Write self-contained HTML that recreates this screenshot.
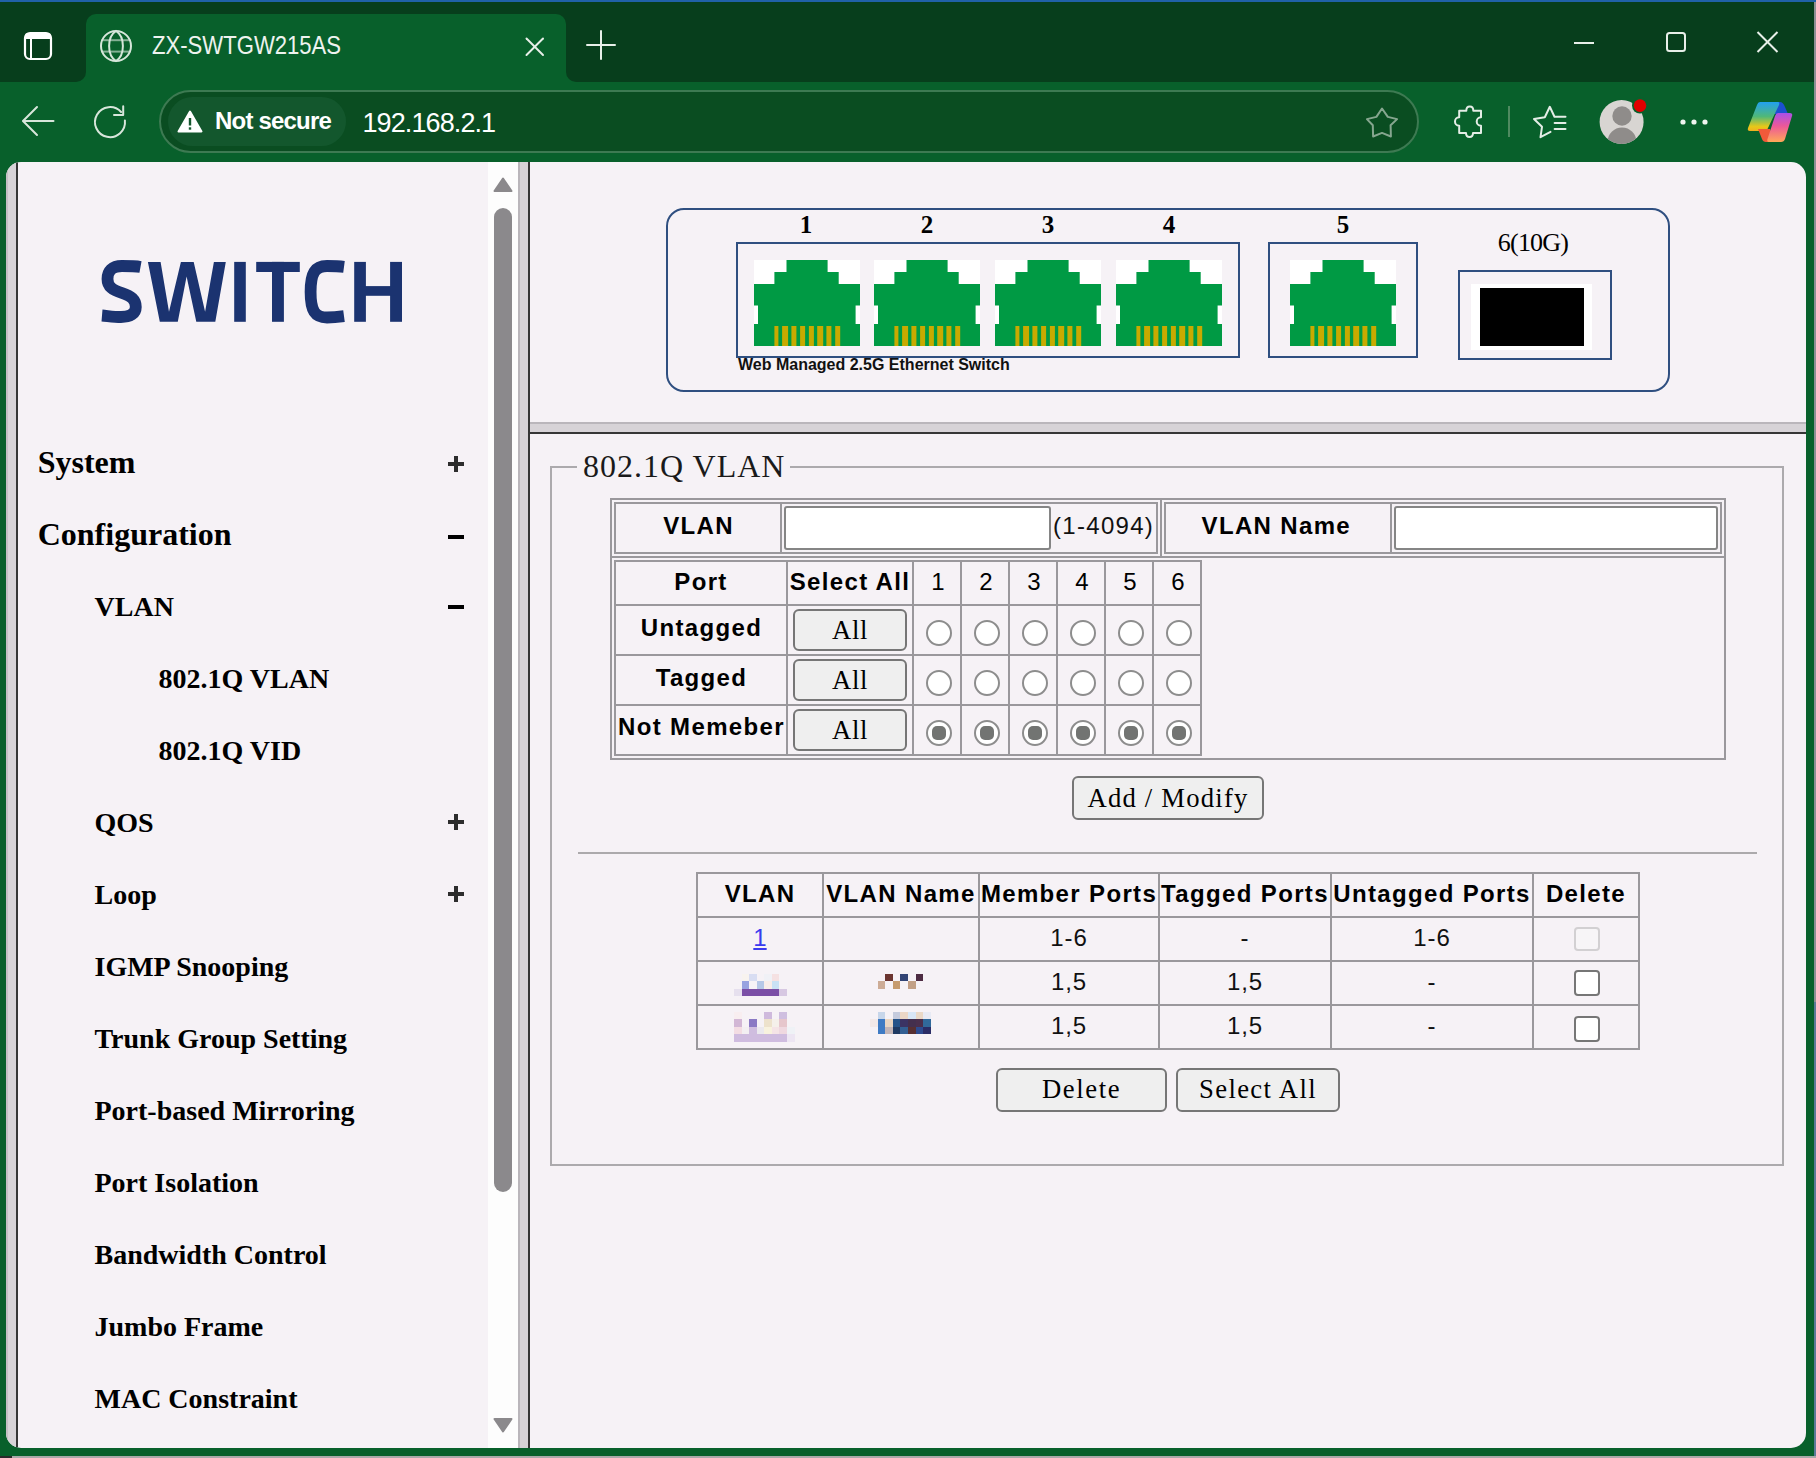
<!DOCTYPE html><html><head><meta charset="utf-8"><title>ZX-SWTGW215AS</title><style>html,body{margin:0;padding:0}body{width:1816px;height:1458px;overflow:hidden;position:relative}*{box-sizing:border-box}</style></head><body><div style="position:absolute;left:0px;top:0px;width:1816px;height:1458px;background:#5b7a98"></div><div style="position:absolute;left:0px;top:0px;width:1816px;height:2px;background:#2062a8"></div><div style="position:absolute;left:0px;top:2px;width:1814px;height:1454px;background:#08602b"></div><div style="position:absolute;left:0px;top:1456px;width:12px;height:2px;background:#2a2a2a"></div><div style="position:absolute;left:12px;top:1456px;width:1804px;height:2px;background:#a9a9a9"></div><div style="position:absolute;left:1814px;top:2px;width:2px;height:1000px;background:#8d8f94"></div><div style="position:absolute;left:0px;top:2px;width:86px;height:80px;background:#073e1c;border-bottom-right-radius:10px"></div><div style="position:absolute;left:566px;top:2px;width:1248px;height:80px;background:#073e1c;border-bottom-left-radius:10px"></div><div style="position:absolute;left:86px;top:2px;width:480px;height:30px;background:#073e1c"></div><div style="position:absolute;left:86px;top:14px;width:480px;height:68px;background:#08602b;border-top-left-radius:10px;border-top-right-radius:10px"></div><svg style="position:absolute;left:22px;top:30px;" width="32" height="32" viewBox="0 0 32 32"><rect x="3" y="3" width="26" height="26" rx="5" fill="none" stroke="#fff" stroke-width="2.2"/><rect x="3" y="3" width="26" height="6" rx="3" fill="#fff"/><rect x="3" y="6" width="26" height="3" fill="#fff"/><line x1="9" y1="8" x2="9" y2="28" stroke="#fff" stroke-width="2"/></svg><svg style="position:absolute;left:99px;top:29px;" width="34" height="34" viewBox="0 0 34 34"><g fill="none" stroke="#d6e6da" stroke-width="2"><circle cx="17" cy="17" r="15"/><path d="M17 2 C11.5 5.5 10.1 10 10.1 17 C10.1 24 11.5 28.5 17 32 C22.5 28.5 23.9 24 23.9 17 C23.9 10 22.5 5.5 17 2 Z"/><g stroke-opacity="0.6"><line x1="2.5" y1="11.2" x2="31.5" y2="11.2"/><line x1="2.5" y1="22.6" x2="31.5" y2="22.6"/></g></g></svg><div style="position:absolute;left:152px;top:32.38px;font:normal 25px/27.925px 'Liberation Sans',sans-serif;color:#eef3ef;letter-spacing:0px;white-space:nowrap;text-align:left;transform-origin:0 0;transform:scaleX(0.884)">ZX-SWTGW215AS</div><svg style="position:absolute;left:522px;top:34px;" width="26" height="26" viewBox="0 0 26 26"><g stroke="#e8efe9" stroke-width="2" stroke-linecap="round"><line x1="4.5" y1="4.5" x2="21" y2="21"/><line x1="21" y1="4.5" x2="4.5" y2="21"/></g></svg><svg style="position:absolute;left:584px;top:28px;" width="34" height="34" viewBox="0 0 34 34"><g stroke="#e8efe9" stroke-width="2" stroke-linecap="round"><line x1="17" y1="3" x2="17" y2="31"/><line x1="3" y1="17" x2="31" y2="17"/></g></svg><svg style="position:absolute;left:1570px;top:36px;" width="28" height="14" viewBox="0 0 28 14"><line x1="4" y1="7" x2="24" y2="7" stroke="#e8efe9" stroke-width="2"/></svg><svg style="position:absolute;left:1662px;top:28px;" width="28" height="28" viewBox="0 0 28 28"><rect x="5" y="5" width="18" height="18" rx="2.5" fill="none" stroke="#e8efe9" stroke-width="2"/></svg><svg style="position:absolute;left:1753px;top:28px;" width="30" height="28" viewBox="0 0 30 28"><g stroke="#e8efe9" stroke-width="2"><line x1="4.5" y1="4" x2="24.5" y2="24"/><line x1="24.5" y1="4" x2="4.5" y2="24"/></g></svg><svg style="position:absolute;left:14px;top:98px;" width="48" height="48" viewBox="0 0 48 48"><g fill="none" stroke="#d8e6db" stroke-width="2" stroke-linecap="round" stroke-linejoin="round"><line x1="9.5" y1="23" x2="39.5" y2="23"/><polyline points="23,9 9,23 23,37"/></g></svg><svg style="position:absolute;left:86px;top:98px;" width="48" height="48" viewBox="0 0 48 48"><g fill="none" stroke="#d8e6db" stroke-width="2" stroke-linecap="round" stroke-linejoin="round"><path d="M38.9 22.4 A 15 15 0 1 1 35.1 14"/><polyline points="28,17.1 37.2,17.1 37.2,8.2"/></g></svg><div style="position:absolute;left:159px;top:90px;width:1260px;height:63px;background:#0a4d21;border:2px solid #3d7a52;border-radius:32px"></div><div style="position:absolute;left:168px;top:97px;width:178px;height:49px;background:#13572d;border-radius:25px"></div><svg style="position:absolute;left:175px;top:108px;" width="30" height="26" viewBox="0 0 30 26"><path d="M15 3.5 L26.5 23.5 L3.5 23.5 Z" fill="#fff" stroke="#fff" stroke-width="2" stroke-linejoin="round"/><rect x="13.8" y="10" width="2.4" height="7.5" fill="#13572d"/><rect x="13.8" y="19.3" width="2.4" height="2.4" fill="#13572d"/></svg><div style="position:absolute;left:215px;top:108.28px;font:bold 24px/26.808px 'Liberation Sans',sans-serif;color:#fff;letter-spacing:-0.8px;white-space:nowrap;text-align:left;">Not secure</div><div style="position:absolute;left:362.5px;top:107.87px;font:normal 27px/30.159px 'Liberation Sans',sans-serif;color:#fff;letter-spacing:-0.9px;white-space:nowrap;text-align:left;">192.168.2.1</div><svg style="position:absolute;left:1356px;top:98px;" width="52" height="48" viewBox="0 0 52 48"><polygon points="26,10.5 20.4,18.9 10.9,21.1 16.8,27.3 17.1,38.5 26,34.9 34.9,38.5 34.6,27.3 41.1,21.1 31.8,18.9" fill="none" stroke="#86a68f" stroke-width="2" stroke-linejoin="round"/></svg><svg style="position:absolute;left:1446px;top:100px;" width="44" height="44" viewBox="0 0 44 44"><path d="M13.2 10.7 H20.3 C20.3 5.2 27.3 5.2 27.3 10.7 H35 V17.2 C29.3 17.2 29.3 25.8 35 25.8 V33 H27 C27 38.3 20 38.3 20 33 H13.2 V25.8 C7.6 25.8 7.6 17.2 13.2 17.2 Z" fill="none" stroke="#e4ede6" stroke-width="2" stroke-linejoin="round"/></svg><div style="position:absolute;left:1508px;top:106px;width:2px;height:31px;background:#4f8a60"></div><svg style="position:absolute;left:1526px;top:100px;" width="48" height="44" viewBox="0 0 48 44"><g fill="none" stroke="#e4ede6" stroke-width="2" stroke-linejoin="round" stroke-linecap="round"><polyline points="24.5,31.9 14.5,37.2 16,26.8 8,19 18.8,17.2 23.8,6.8 28.5,16.8 39.5,16.8"/><line x1="28.6" y1="22.9" x2="39.5" y2="22.9"/><line x1="28.6" y1="29" x2="39.5" y2="29"/></g></svg><svg style="position:absolute;left:1596px;top:96px;" width="52" height="52" viewBox="0 0 52 52"><defs><clipPath id="pc"><circle cx="25.6" cy="26" r="22"/></clipPath></defs><circle cx="25.6" cy="26" r="22" fill="#d8d5d2"/><g clip-path="url(#pc)" fill="#8f8c8a"><circle cx="26" cy="20" r="9.7"/><ellipse cx="26" cy="46" rx="14.5" ry="14.5"/></g><circle cx="44" cy="9.6" r="8" fill="#08602b"/><circle cx="44" cy="9.6" r="6.3" fill="#e00000"/></svg><svg style="position:absolute;left:1678px;top:114px;" width="32" height="16" viewBox="0 0 32 16"><g fill="#f0f4f0"><circle cx="5" cy="8" r="2.6"/><circle cx="16" cy="8" r="2.6"/><circle cx="27" cy="8" r="2.6"/></g></svg><svg style="position:absolute;left:1740px;top:96px;" width="60" height="52" viewBox="0 0 60 52"><defs><linearGradient id="cg1" x1="0" y1="0" x2="0" y2="1"><stop offset="0" stop-color="#22a0f0"/><stop offset="0.5" stop-color="#50b878"/><stop offset="0.85" stop-color="#e8c818"/><stop offset="1" stop-color="#f0b020"/></linearGradient><linearGradient id="cg2" x1="0" y1="0" x2="0" y2="1"><stop offset="0" stop-color="#a850e8"/><stop offset="0.45" stop-color="#ec5898"/><stop offset="1" stop-color="#ffa858"/></linearGradient></defs><path d="M34 6 H40 Q43 6 45 11 L48 18 H34 Z" fill="#1c50d0"/><path d="M20 6 H38 Q40 6 39 9 L27 34 Q26 35 24 35 H10 Q7 35 8 32 L17 9 Q18 6 20 6 Z" fill="url(#cg1)"/><path d="M18 33 H30 L34 46 H26 Q23 46 22 43 Z" fill="#f05a3a"/><path d="M38 17 H50 Q53 17 52 20 L45 43 Q44 46 41 46 H29 Q26.5 46 27.5 43 L35 20 Q36 17 38 17 Z" fill="url(#cg2)"/></svg><div style="position:absolute;left:0;top:0;width:1816px;height:1458px;clip-path:inset(162px 10px 10px 6px round 15px)"><div style="position:absolute;left:6px;top:162px;width:1800px;height:1286px;background:#f6f2f6"></div><div style="position:absolute;left:6px;top:162px;width:2px;height:1286px;background:#c4bfc4"></div><div style="position:absolute;left:8px;top:162px;width:8px;height:1286px;background:#d7d3d7"></div><div style="position:absolute;left:16px;top:162px;width:2px;height:1286px;background:#363636"></div><div style="position:absolute;left:488px;top:162px;width:30px;height:1286px;background:#fdfdfd"></div><svg style="position:absolute;left:492px;top:176px;" width="22" height="18" viewBox="0 0 22 18"><path d="M11 2.5 L19.5 15 L2.5 15 Z" fill="#8b898c" stroke="#8b898c" stroke-width="2" stroke-linejoin="round"/></svg><div style="position:absolute;left:494px;top:208px;width:18px;height:984px;background:#8b898c;border-radius:9px"></div><svg style="position:absolute;left:492px;top:1416px;" width="22" height="18" viewBox="0 0 22 18"><path d="M2.5 3 L19.5 3 L11 15.5 Z" fill="#8b898c" stroke="#8b898c" stroke-width="2" stroke-linejoin="round"/></svg><div style="position:absolute;left:518px;top:162px;width:2px;height:1286px;background:#bab6bb"></div><div style="position:absolute;left:520px;top:162px;width:8px;height:1286px;background:#d7d3d7"></div><div style="position:absolute;left:528px;top:162px;width:2px;height:1286px;background:#363636"></div><div style="position:absolute;left:530px;top:422px;width:1276px;height:2px;background:#bab6bb"></div><div style="position:absolute;left:530px;top:424px;width:1276px;height:8px;background:#d7d3d7"></div><div style="position:absolute;left:530px;top:432px;width:1276px;height:2px;background:#363636"></div><svg style="position:absolute;left:0px;top:240px;" width="420" height="100" viewBox="0 0 420 100"><g transform="translate(0,-240)" fill="#1b3370"><path d="M140.5 267 C135 266 128 266 122 266 C112 266 107.5 271 107.5 279 C107.5 287 113 290 122 293 C131 296 135.8 299.5 135.8 307 C135.8 314 130 317 121 317 C114 317 108 316 102 315.5" fill="none" stroke="#1b3370" stroke-width="11.8"/><polygon points="147.9,261.9 160.6,261.9 169,311.7 180.9,261.9 193.7,261.9 205.1,311.7 213.9,261.9 225.8,261.9 215.3,321.8 196.3,321.8 186.6,276.4 177.8,321.8 159.8,321.8"/><rect x="234.2" y="261.9" width="11.6" height="59.9"/><rect x="256.2" y="261.9" width="43.6" height="10.1"/><rect x="272" y="261.9" width="11.9" height="59.9"/><path d="M344 266.8 C338 266 332 266 327 266 C315 266 310.6 273 310.6 292 C310.6 311 315 317.5 327 317.5 C332 317.5 338 317 344 316.2" fill="none" stroke="#1b3370" stroke-width="11.8"/><rect x="354.2" y="261.9" width="11.7" height="59.9"/><rect x="390.1" y="261.9" width="11.9" height="59.9"/><rect x="360" y="286.1" width="36" height="9.7"/></g></svg><div style="position:absolute;left:37.7px;top:445.49px;font:bold 32px/35.424px 'Liberation Serif',serif;color:#000;letter-spacing:0px;white-space:nowrap;text-align:left;">System</div><div style="position:absolute;left:448px;top:462px;width:16px;height:3.5px;background:#2d2d2d"></div><div style="position:absolute;left:454.25px;top:456px;width:3.5px;height:16px;background:#2d2d2d"></div><div style="position:absolute;left:37.7px;top:517.49px;font:bold 32px/35.424px 'Liberation Serif',serif;color:#000;letter-spacing:0px;white-space:nowrap;text-align:left;">Configuration</div><div style="position:absolute;left:448px;top:535px;width:16px;height:3.5px;background:#000"></div><div style="position:absolute;left:94.6px;top:591.05px;font:bold 28px/30.996px 'Liberation Serif',serif;color:#000;letter-spacing:0px;white-space:nowrap;text-align:left;">VLAN</div><div style="position:absolute;left:448px;top:605px;width:16px;height:3.5px;background:#000"></div><div style="position:absolute;left:158.5px;top:663.05px;font:bold 28px/30.996px 'Liberation Serif',serif;color:#000;letter-spacing:0px;white-space:nowrap;text-align:left;">802.1Q VLAN</div><div style="position:absolute;left:158.5px;top:735.05px;font:bold 28px/30.996px 'Liberation Serif',serif;color:#000;letter-spacing:0px;white-space:nowrap;text-align:left;">802.1Q VID</div><div style="position:absolute;left:94.5px;top:807.05px;font:bold 28px/30.996px 'Liberation Serif',serif;color:#000;letter-spacing:0px;white-space:nowrap;text-align:left;">QOS</div><div style="position:absolute;left:448px;top:820px;width:16px;height:3.5px;background:#2d2d2d"></div><div style="position:absolute;left:454.25px;top:814px;width:3.5px;height:16px;background:#2d2d2d"></div><div style="position:absolute;left:94.5px;top:879.05px;font:bold 28px/30.996px 'Liberation Serif',serif;color:#000;letter-spacing:0px;white-space:nowrap;text-align:left;">Loop</div><div style="position:absolute;left:448px;top:892px;width:16px;height:3.5px;background:#2d2d2d"></div><div style="position:absolute;left:454.25px;top:886px;width:3.5px;height:16px;background:#2d2d2d"></div><div style="position:absolute;left:94.5px;top:951.05px;font:bold 28px/30.996px 'Liberation Serif',serif;color:#000;letter-spacing:0px;white-space:nowrap;text-align:left;">IGMP Snooping</div><div style="position:absolute;left:94.5px;top:1023.05px;font:bold 28px/30.996px 'Liberation Serif',serif;color:#000;letter-spacing:0px;white-space:nowrap;text-align:left;">Trunk Group Setting</div><div style="position:absolute;left:94.5px;top:1095.05px;font:bold 28px/30.996px 'Liberation Serif',serif;color:#000;letter-spacing:0px;white-space:nowrap;text-align:left;">Port-based Mirroring</div><div style="position:absolute;left:94.5px;top:1167.05px;font:bold 28px/30.996px 'Liberation Serif',serif;color:#000;letter-spacing:0px;white-space:nowrap;text-align:left;">Port Isolation</div><div style="position:absolute;left:94.5px;top:1239.05px;font:bold 28px/30.996px 'Liberation Serif',serif;color:#000;letter-spacing:0px;white-space:nowrap;text-align:left;">Bandwidth Control</div><div style="position:absolute;left:94.5px;top:1311.05px;font:bold 28px/30.996px 'Liberation Serif',serif;color:#000;letter-spacing:0px;white-space:nowrap;text-align:left;">Jumbo Frame</div><div style="position:absolute;left:94.5px;top:1383.05px;font:bold 28px/30.996px 'Liberation Serif',serif;color:#000;letter-spacing:0px;white-space:nowrap;text-align:left;">MAC Constraint</div><div style="position:absolute;left:666px;top:208px;width:1004px;height:184px;border:2px solid #2f4f80;border-radius:18px"></div><div style="position:absolute;left:736px;top:242px;width:504px;height:116px;border:2px solid #2f4f80"></div><div style="position:absolute;left:1268px;top:242px;width:150px;height:116px;border:2px solid #2f4f80"></div><div style="position:absolute;left:1458px;top:270px;width:154px;height:90px;border:2px solid #2f4f80"></div><div style="position:absolute;left:1471px;top:284px;width:121px;height:66px;background:#fff"></div><div style="position:absolute;left:1480px;top:288px;width:104px;height:58px;background:#000"></div><svg style="position:absolute;left:754px;top:260px;" width="106" height="86" viewBox="0 0 106 86"><rect x="0" y="0" width="106" height="86" fill="#fff"/><path d="M32.5 0 H73.6 V12 H84.7 V24 H106 V45.5 H101.6 V64 H106 V86 H0 V64 H4 V45.5 H0 V24 H20.4 V12 H32.5 Z" fill="#009a44"/><rect x="20.4" y="66" width="4" height="20" fill="#c8aa00"/><rect x="28.1" y="66" width="6" height="20" fill="#c8aa00"/><rect x="37.4" y="66" width="5" height="20" fill="#c8aa00"/><rect x="46.1" y="66" width="5" height="20" fill="#c8aa00"/><rect x="54.9" y="66" width="5" height="20" fill="#c8aa00"/><rect x="63.2" y="66" width="6" height="20" fill="#c8aa00"/><rect x="72.4" y="66" width="5" height="20" fill="#c8aa00"/><rect x="81.2" y="66" width="5" height="20" fill="#c8aa00"/></svg><svg style="position:absolute;left:874px;top:260px;" width="106" height="86" viewBox="0 0 106 86"><rect x="0" y="0" width="106" height="86" fill="#fff"/><path d="M32.5 0 H73.6 V12 H84.7 V24 H106 V45.5 H101.6 V64 H106 V86 H0 V64 H4 V45.5 H0 V24 H20.4 V12 H32.5 Z" fill="#009a44"/><rect x="20.4" y="66" width="4" height="20" fill="#c8aa00"/><rect x="28.1" y="66" width="6" height="20" fill="#c8aa00"/><rect x="37.4" y="66" width="5" height="20" fill="#c8aa00"/><rect x="46.1" y="66" width="5" height="20" fill="#c8aa00"/><rect x="54.9" y="66" width="5" height="20" fill="#c8aa00"/><rect x="63.2" y="66" width="6" height="20" fill="#c8aa00"/><rect x="72.4" y="66" width="5" height="20" fill="#c8aa00"/><rect x="81.2" y="66" width="5" height="20" fill="#c8aa00"/></svg><svg style="position:absolute;left:995px;top:260px;" width="106" height="86" viewBox="0 0 106 86"><rect x="0" y="0" width="106" height="86" fill="#fff"/><path d="M32.5 0 H73.6 V12 H84.7 V24 H106 V45.5 H101.6 V64 H106 V86 H0 V64 H4 V45.5 H0 V24 H20.4 V12 H32.5 Z" fill="#009a44"/><rect x="20.4" y="66" width="4" height="20" fill="#c8aa00"/><rect x="28.1" y="66" width="6" height="20" fill="#c8aa00"/><rect x="37.4" y="66" width="5" height="20" fill="#c8aa00"/><rect x="46.1" y="66" width="5" height="20" fill="#c8aa00"/><rect x="54.9" y="66" width="5" height="20" fill="#c8aa00"/><rect x="63.2" y="66" width="6" height="20" fill="#c8aa00"/><rect x="72.4" y="66" width="5" height="20" fill="#c8aa00"/><rect x="81.2" y="66" width="5" height="20" fill="#c8aa00"/></svg><svg style="position:absolute;left:1116px;top:260px;" width="106" height="86" viewBox="0 0 106 86"><rect x="0" y="0" width="106" height="86" fill="#fff"/><path d="M32.5 0 H73.6 V12 H84.7 V24 H106 V45.5 H101.6 V64 H106 V86 H0 V64 H4 V45.5 H0 V24 H20.4 V12 H32.5 Z" fill="#009a44"/><rect x="20.4" y="66" width="4" height="20" fill="#c8aa00"/><rect x="28.1" y="66" width="6" height="20" fill="#c8aa00"/><rect x="37.4" y="66" width="5" height="20" fill="#c8aa00"/><rect x="46.1" y="66" width="5" height="20" fill="#c8aa00"/><rect x="54.9" y="66" width="5" height="20" fill="#c8aa00"/><rect x="63.2" y="66" width="6" height="20" fill="#c8aa00"/><rect x="72.4" y="66" width="5" height="20" fill="#c8aa00"/><rect x="81.2" y="66" width="5" height="20" fill="#c8aa00"/></svg><svg style="position:absolute;left:1290px;top:260px;" width="106" height="86" viewBox="0 0 106 86"><rect x="0" y="0" width="106" height="86" fill="#fff"/><path d="M32.5 0 H73.6 V12 H84.7 V24 H106 V45.5 H101.6 V64 H106 V86 H0 V64 H4 V45.5 H0 V24 H20.4 V12 H32.5 Z" fill="#009a44"/><rect x="20.4" y="66" width="4" height="20" fill="#c8aa00"/><rect x="28.1" y="66" width="6" height="20" fill="#c8aa00"/><rect x="37.4" y="66" width="5" height="20" fill="#c8aa00"/><rect x="46.1" y="66" width="5" height="20" fill="#c8aa00"/><rect x="54.9" y="66" width="5" height="20" fill="#c8aa00"/><rect x="63.2" y="66" width="6" height="20" fill="#c8aa00"/><rect x="72.4" y="66" width="5" height="20" fill="#c8aa00"/><rect x="81.2" y="66" width="5" height="20" fill="#c8aa00"/></svg><div style="position:absolute;left:776.0px;width:60px;top:211.22px;font:bold 25px/27.675px 'Liberation Serif',serif;color:#000;letter-spacing:0px;white-space:nowrap;text-align:center;">1</div><div style="position:absolute;left:897.0px;width:60px;top:211.22px;font:bold 25px/27.675px 'Liberation Serif',serif;color:#000;letter-spacing:0px;white-space:nowrap;text-align:center;">2</div><div style="position:absolute;left:1018.0px;width:60px;top:211.22px;font:bold 25px/27.675px 'Liberation Serif',serif;color:#000;letter-spacing:0px;white-space:nowrap;text-align:center;">3</div><div style="position:absolute;left:1139.0px;width:60px;top:211.22px;font:bold 25px/27.675px 'Liberation Serif',serif;color:#000;letter-spacing:0px;white-space:nowrap;text-align:center;">4</div><div style="position:absolute;left:1313.0px;width:60px;top:211.22px;font:bold 25px/27.675px 'Liberation Serif',serif;color:#000;letter-spacing:0px;white-space:nowrap;text-align:center;">5</div><div style="position:absolute;left:1433.0px;width:200px;top:229.33px;font:normal 26px/28.782px 'Liberation Serif',serif;color:#000;letter-spacing:-0.8px;white-space:nowrap;text-align:center;">6(10G)</div><div style="position:absolute;left:738px;top:355.82px;font:bold 16px/17.872px 'Liberation Sans',sans-serif;color:#111;letter-spacing:0px;white-space:nowrap;text-align:left;">Web Managed 2.5G Ethernet Switch</div><div style="position:absolute;left:550px;top:466px;width:27px;height:2px;background:#acaaad"></div><div style="position:absolute;left:790px;top:466px;width:994px;height:2px;background:#acaaad"></div><div style="position:absolute;left:550px;top:466px;width:2px;height:700px;background:#acaaad"></div><div style="position:absolute;left:1782px;top:466px;width:2px;height:700px;background:#acaaad"></div><div style="position:absolute;left:550px;top:1164px;width:1234px;height:2px;background:#acaaad"></div><div style="position:absolute;left:583px;top:449.09px;font:normal 32px/35.424px 'Liberation Serif',serif;color:#1a1a1a;letter-spacing:1.0px;white-space:nowrap;text-align:left;">802.1Q VLAN</div><div style="position:absolute;left:610px;top:498px;width:1116px;height:262px;border:2px solid #9a989c"></div><div style="position:absolute;left:614px;top:502px;width:544px;height:52px;border:2px solid #9a989c"></div><div style="position:absolute;left:780px;top:502px;width:2px;height:52px;background:#9a989c"></div><div style="position:absolute;left:1160px;top:500px;width:2px;height:58px;background:#9a989c"></div><div style="position:absolute;left:1164px;top:502px;width:558px;height:52px;border:2px solid #9a989c"></div><div style="position:absolute;left:1390px;top:502px;width:2px;height:52px;background:#9a989c"></div><div style="position:absolute;left:612px;top:556px;width:1112px;height:2px;background:#9a989c"></div><div style="position:absolute;left:784px;top:506px;width:267px;height:44px;background:#fff;border:2px solid #858585;border-radius:3px"></div><div style="position:absolute;left:1394px;top:506px;width:324px;height:44px;background:#fff;border:2px solid #858585;border-radius:3px"></div><div style="position:absolute;left:598.5px;width:200px;top:512.78px;font:bold 24px/26.808px 'Liberation Sans',sans-serif;color:#000;letter-spacing:1.35px;white-space:nowrap;text-align:center;">VLAN</div><div style="position:absolute;left:1053px;top:513.28px;font:normal 24px/26.808px 'Liberation Sans',sans-serif;color:#111;letter-spacing:1.3px;white-space:nowrap;text-align:left;">(1-4094)</div><div style="position:absolute;left:1126.3px;width:300px;top:512.58px;font:bold 24px/26.808px 'Liberation Sans',sans-serif;color:#000;letter-spacing:1.35px;white-space:nowrap;text-align:center;">VLAN Name</div><div style="position:absolute;left:614px;top:560px;width:588px;height:196px;border:2px solid #9a989c"></div><div style="position:absolute;left:786px;top:560px;width:2px;height:196px;background:#9a989c"></div><div style="position:absolute;left:912px;top:560px;width:2px;height:196px;background:#9a989c"></div><div style="position:absolute;left:960px;top:560px;width:2px;height:196px;background:#9a989c"></div><div style="position:absolute;left:1008px;top:560px;width:2px;height:196px;background:#9a989c"></div><div style="position:absolute;left:1056px;top:560px;width:2px;height:196px;background:#9a989c"></div><div style="position:absolute;left:1104px;top:560px;width:2px;height:196px;background:#9a989c"></div><div style="position:absolute;left:1152px;top:560px;width:2px;height:196px;background:#9a989c"></div><div style="position:absolute;left:614px;top:604px;width:588px;height:2px;background:#9a989c"></div><div style="position:absolute;left:614px;top:654px;width:588px;height:2px;background:#9a989c"></div><div style="position:absolute;left:614px;top:704px;width:588px;height:2px;background:#9a989c"></div><div style="position:absolute;left:551.0px;width:300px;top:568.78px;font:bold 24px/26.808px 'Liberation Sans',sans-serif;color:#000;letter-spacing:1.35px;white-space:nowrap;text-align:center;">Port</div><div style="position:absolute;left:700.0px;width:300px;top:568.78px;font:bold 24px/26.808px 'Liberation Sans',sans-serif;color:#000;letter-spacing:1.35px;white-space:nowrap;text-align:center;">Select All</div><div style="position:absolute;left:908.0px;width:60px;top:568.78px;font:normal 24px/26.808px 'Liberation Sans',sans-serif;color:#000;letter-spacing:0px;white-space:nowrap;text-align:center;">1</div><div style="position:absolute;left:956.0px;width:60px;top:568.78px;font:normal 24px/26.808px 'Liberation Sans',sans-serif;color:#000;letter-spacing:0px;white-space:nowrap;text-align:center;">2</div><div style="position:absolute;left:1004.0px;width:60px;top:568.78px;font:normal 24px/26.808px 'Liberation Sans',sans-serif;color:#000;letter-spacing:0px;white-space:nowrap;text-align:center;">3</div><div style="position:absolute;left:1052.0px;width:60px;top:568.78px;font:normal 24px/26.808px 'Liberation Sans',sans-serif;color:#000;letter-spacing:0px;white-space:nowrap;text-align:center;">4</div><div style="position:absolute;left:1100.0px;width:60px;top:568.78px;font:normal 24px/26.808px 'Liberation Sans',sans-serif;color:#000;letter-spacing:0px;white-space:nowrap;text-align:center;">5</div><div style="position:absolute;left:1148.0px;width:60px;top:568.78px;font:normal 24px/26.808px 'Liberation Sans',sans-serif;color:#000;letter-spacing:0px;white-space:nowrap;text-align:center;">6</div><div style="position:absolute;left:551.5px;width:300px;top:614.98px;font:bold 24px/26.808px 'Liberation Sans',sans-serif;color:#000;letter-spacing:1.35px;white-space:nowrap;text-align:center;">Untagged</div><div style="position:absolute;left:793px;top:609px;width:114px;height:42px;background:#efefef;border:2px solid #767676;border-radius:6px"></div><div style="position:absolute;left:750.0px;width:200px;top:616.24px;font:normal 26.67px/29.524px 'Liberation Serif',serif;color:#000;letter-spacing:0.6px;white-space:nowrap;text-align:center;">All</div><svg style="position:absolute;left:925px;top:619px;" width="28" height="28" viewBox="0 0 28 28"><circle cx="14" cy="14" r="12" fill="#fff" stroke="#8d8d8d" stroke-width="2"/></svg><svg style="position:absolute;left:973px;top:619px;" width="28" height="28" viewBox="0 0 28 28"><circle cx="14" cy="14" r="12" fill="#fff" stroke="#8d8d8d" stroke-width="2"/></svg><svg style="position:absolute;left:1021px;top:619px;" width="28" height="28" viewBox="0 0 28 28"><circle cx="14" cy="14" r="12" fill="#fff" stroke="#8d8d8d" stroke-width="2"/></svg><svg style="position:absolute;left:1069px;top:619px;" width="28" height="28" viewBox="0 0 28 28"><circle cx="14" cy="14" r="12" fill="#fff" stroke="#8d8d8d" stroke-width="2"/></svg><svg style="position:absolute;left:1117px;top:619px;" width="28" height="28" viewBox="0 0 28 28"><circle cx="14" cy="14" r="12" fill="#fff" stroke="#8d8d8d" stroke-width="2"/></svg><svg style="position:absolute;left:1165px;top:619px;" width="28" height="28" viewBox="0 0 28 28"><circle cx="14" cy="14" r="12" fill="#fff" stroke="#8d8d8d" stroke-width="2"/></svg><div style="position:absolute;left:551.5px;width:300px;top:664.78px;font:bold 24px/26.808px 'Liberation Sans',sans-serif;color:#000;letter-spacing:1.35px;white-space:nowrap;text-align:center;">Tagged</div><div style="position:absolute;left:793px;top:659px;width:114px;height:42px;background:#efefef;border:2px solid #767676;border-radius:6px"></div><div style="position:absolute;left:750.0px;width:200px;top:666.24px;font:normal 26.67px/29.524px 'Liberation Serif',serif;color:#000;letter-spacing:0.6px;white-space:nowrap;text-align:center;">All</div><svg style="position:absolute;left:925px;top:669px;" width="28" height="28" viewBox="0 0 28 28"><circle cx="14" cy="14" r="12" fill="#fff" stroke="#8d8d8d" stroke-width="2"/></svg><svg style="position:absolute;left:973px;top:669px;" width="28" height="28" viewBox="0 0 28 28"><circle cx="14" cy="14" r="12" fill="#fff" stroke="#8d8d8d" stroke-width="2"/></svg><svg style="position:absolute;left:1021px;top:669px;" width="28" height="28" viewBox="0 0 28 28"><circle cx="14" cy="14" r="12" fill="#fff" stroke="#8d8d8d" stroke-width="2"/></svg><svg style="position:absolute;left:1069px;top:669px;" width="28" height="28" viewBox="0 0 28 28"><circle cx="14" cy="14" r="12" fill="#fff" stroke="#8d8d8d" stroke-width="2"/></svg><svg style="position:absolute;left:1117px;top:669px;" width="28" height="28" viewBox="0 0 28 28"><circle cx="14" cy="14" r="12" fill="#fff" stroke="#8d8d8d" stroke-width="2"/></svg><svg style="position:absolute;left:1165px;top:669px;" width="28" height="28" viewBox="0 0 28 28"><circle cx="14" cy="14" r="12" fill="#fff" stroke="#8d8d8d" stroke-width="2"/></svg><div style="position:absolute;left:551.5px;width:300px;top:714.28px;font:bold 24px/26.808px 'Liberation Sans',sans-serif;color:#000;letter-spacing:1.35px;white-space:nowrap;text-align:center;">Not Memeber</div><div style="position:absolute;left:793px;top:709px;width:114px;height:42px;background:#efefef;border:2px solid #767676;border-radius:6px"></div><div style="position:absolute;left:750.0px;width:200px;top:716.24px;font:normal 26.67px/29.524px 'Liberation Serif',serif;color:#000;letter-spacing:0.6px;white-space:nowrap;text-align:center;">All</div><svg style="position:absolute;left:925px;top:719px;" width="28" height="28" viewBox="0 0 28 28"><circle cx="14" cy="14" r="12" fill="#fff" stroke="#8d8d8d" stroke-width="2"/><rect x="7" y="7" width="14" height="14" rx="5" fill="#727472"/></svg><svg style="position:absolute;left:973px;top:719px;" width="28" height="28" viewBox="0 0 28 28"><circle cx="14" cy="14" r="12" fill="#fff" stroke="#8d8d8d" stroke-width="2"/><rect x="7" y="7" width="14" height="14" rx="5" fill="#727472"/></svg><svg style="position:absolute;left:1021px;top:719px;" width="28" height="28" viewBox="0 0 28 28"><circle cx="14" cy="14" r="12" fill="#fff" stroke="#8d8d8d" stroke-width="2"/><rect x="7" y="7" width="14" height="14" rx="5" fill="#727472"/></svg><svg style="position:absolute;left:1069px;top:719px;" width="28" height="28" viewBox="0 0 28 28"><circle cx="14" cy="14" r="12" fill="#fff" stroke="#8d8d8d" stroke-width="2"/><rect x="7" y="7" width="14" height="14" rx="5" fill="#727472"/></svg><svg style="position:absolute;left:1117px;top:719px;" width="28" height="28" viewBox="0 0 28 28"><circle cx="14" cy="14" r="12" fill="#fff" stroke="#8d8d8d" stroke-width="2"/><rect x="7" y="7" width="14" height="14" rx="5" fill="#727472"/></svg><svg style="position:absolute;left:1165px;top:719px;" width="28" height="28" viewBox="0 0 28 28"><circle cx="14" cy="14" r="12" fill="#fff" stroke="#8d8d8d" stroke-width="2"/><rect x="7" y="7" width="14" height="14" rx="5" fill="#727472"/></svg><div style="position:absolute;left:1072px;top:776px;width:192px;height:44px;background:#efefef;border:2px solid #767676;border-radius:6px"></div><div style="position:absolute;left:1018.0px;width:300px;top:783.74px;font:normal 26.67px/29.524px 'Liberation Serif',serif;color:#000;letter-spacing:1.2px;white-space:nowrap;text-align:center;">Add / Modify</div><div style="position:absolute;left:578px;top:852px;width:1179px;height:2px;background:#acaaac"></div><div style="position:absolute;left:696px;top:872px;width:944px;height:178px;border:2px solid #9a989c"></div><div style="position:absolute;left:822px;top:872px;width:2px;height:178px;background:#9a989c"></div><div style="position:absolute;left:978px;top:872px;width:2px;height:178px;background:#9a989c"></div><div style="position:absolute;left:1158px;top:872px;width:2px;height:178px;background:#9a989c"></div><div style="position:absolute;left:1330px;top:872px;width:2px;height:178px;background:#9a989c"></div><div style="position:absolute;left:1532px;top:872px;width:2px;height:178px;background:#9a989c"></div><div style="position:absolute;left:696px;top:916px;width:944px;height:2px;background:#9a989c"></div><div style="position:absolute;left:696px;top:960px;width:944px;height:2px;background:#9a989c"></div><div style="position:absolute;left:696px;top:1004px;width:944px;height:2px;background:#9a989c"></div><div style="position:absolute;left:560.0px;width:400px;top:880.78px;font:bold 24px/26.808px 'Liberation Sans',sans-serif;color:#000;letter-spacing:1.35px;white-space:nowrap;text-align:center;">VLAN</div><div style="position:absolute;left:701.0px;width:400px;top:880.78px;font:bold 24px/26.808px 'Liberation Sans',sans-serif;color:#000;letter-spacing:1.35px;white-space:nowrap;text-align:center;">VLAN Name</div><div style="position:absolute;left:869.0px;width:400px;top:880.78px;font:bold 24px/26.808px 'Liberation Sans',sans-serif;color:#000;letter-spacing:1.35px;white-space:nowrap;text-align:center;">Member Ports</div><div style="position:absolute;left:1045.0px;width:400px;top:880.78px;font:bold 24px/26.808px 'Liberation Sans',sans-serif;color:#000;letter-spacing:1.35px;white-space:nowrap;text-align:center;">Tagged Ports</div><div style="position:absolute;left:1232.0px;width:400px;top:880.78px;font:bold 24px/26.808px 'Liberation Sans',sans-serif;color:#000;letter-spacing:1.35px;white-space:nowrap;text-align:center;">Untagged Ports</div><div style="position:absolute;left:1386.0px;width:400px;top:880.78px;font:bold 24px/26.808px 'Liberation Sans',sans-serif;color:#000;letter-spacing:1.35px;white-space:nowrap;text-align:center;">Delete</div><div style="position:absolute;left:710.0px;width:100px;top:924.58px;font:normal 24px/26.808px 'Liberation Sans',sans-serif;color:#3a3aee;letter-spacing:0px;white-space:nowrap;text-align:center;"><span style="text-decoration:underline">1</span></div><div style="position:absolute;left:969.0px;width:200px;top:924.58px;font:normal 24px/26.808px 'Liberation Sans',sans-serif;color:#111;letter-spacing:0.9px;white-space:nowrap;text-align:center;">1-6</div><div style="position:absolute;left:1145.0px;width:200px;top:924.58px;font:normal 24px/26.808px 'Liberation Sans',sans-serif;color:#111;letter-spacing:0.9px;white-space:nowrap;text-align:center;">-</div><div style="position:absolute;left:1332.0px;width:200px;top:924.58px;font:normal 24px/26.808px 'Liberation Sans',sans-serif;color:#111;letter-spacing:0.9px;white-space:nowrap;text-align:center;">1-6</div><div style="position:absolute;left:1574px;top:927px;width:26px;height:24px;background:#f7f5f7;border:2px solid #d2d0d2;border-radius:4px"></div><div style="position:absolute;left:969.0px;width:200px;top:968.58px;font:normal 24px/26.808px 'Liberation Sans',sans-serif;color:#111;letter-spacing:0.9px;white-space:nowrap;text-align:center;">1,5</div><div style="position:absolute;left:1145.0px;width:200px;top:968.58px;font:normal 24px/26.808px 'Liberation Sans',sans-serif;color:#111;letter-spacing:0.9px;white-space:nowrap;text-align:center;">1,5</div><div style="position:absolute;left:1332.0px;width:200px;top:968.58px;font:normal 24px/26.808px 'Liberation Sans',sans-serif;color:#111;letter-spacing:0.9px;white-space:nowrap;text-align:center;">-</div><div style="position:absolute;left:1574px;top:970px;width:26px;height:26px;background:#fff;border:2px solid #767676;border-radius:4px"></div><div style="position:absolute;left:969.0px;width:200px;top:1012.58px;font:normal 24px/26.808px 'Liberation Sans',sans-serif;color:#111;letter-spacing:0.9px;white-space:nowrap;text-align:center;">1,5</div><div style="position:absolute;left:1145.0px;width:200px;top:1012.58px;font:normal 24px/26.808px 'Liberation Sans',sans-serif;color:#111;letter-spacing:0.9px;white-space:nowrap;text-align:center;">1,5</div><div style="position:absolute;left:1332.0px;width:200px;top:1012.58px;font:normal 24px/26.808px 'Liberation Sans',sans-serif;color:#111;letter-spacing:0.9px;white-space:nowrap;text-align:center;">-</div><div style="position:absolute;left:1574px;top:1016px;width:26px;height:26px;background:#fff;border:2px solid #767676;border-radius:4px"></div><div style="position:absolute;left:742px;top:974px;width:7px;height:7px;background:#f8f3ef"></div><div style="position:absolute;left:749px;top:974px;width:8px;height:7px;background:#d8ddf2"></div><div style="position:absolute;left:764px;top:974px;width:8px;height:7px;background:#f0f1f6"></div><div style="position:absolute;left:772px;top:974px;width:7px;height:7px;background:#f5e1e2"></div><div style="position:absolute;left:742px;top:981px;width:7px;height:8px;background:#98a3e0"></div><div style="position:absolute;left:757px;top:981px;width:7px;height:8px;background:#b6c7e7"></div><div style="position:absolute;left:764px;top:981px;width:8px;height:8px;background:#f8ece9"></div><div style="position:absolute;left:772px;top:981px;width:7px;height:8px;background:#c9e1f5"></div><div style="position:absolute;left:734px;top:989px;width:8px;height:7px;background:#e6e0ee"></div><div style="position:absolute;left:742px;top:989px;width:7px;height:7px;background:#7b4fa6"></div><div style="position:absolute;left:749px;top:989px;width:8px;height:7px;background:#7b4fa6"></div><div style="position:absolute;left:757px;top:989px;width:7px;height:7px;background:#7b4fa6"></div><div style="position:absolute;left:764px;top:989px;width:8px;height:7px;background:#7b4fa6"></div><div style="position:absolute;left:772px;top:989px;width:7px;height:7px;background:#7b4fa6"></div><div style="position:absolute;left:779px;top:989px;width:8px;height:7px;background:#d7c8e2"></div><div style="position:absolute;left:885px;top:974px;width:8px;height:7px;background:#6b3530"></div><div style="position:absolute;left:900px;top:974px;width:8px;height:7px;background:#324475"></div><div style="position:absolute;left:916px;top:974px;width:7px;height:7px;background:#4d2c43"></div><div style="position:absolute;left:878px;top:981px;width:7px;height:8px;background:#cdac96"></div><div style="position:absolute;left:893px;top:981px;width:7px;height:8px;background:#c69b6e"></div><div style="position:absolute;left:908px;top:981px;width:8px;height:8px;background:#c2a086"></div><div style="position:absolute;left:734px;top:1012px;width:8px;height:7px;background:#f8eef0"></div><div style="position:absolute;left:764px;top:1012px;width:8px;height:7px;background:#cfbadd"></div><div style="position:absolute;left:779px;top:1012px;width:8px;height:7px;background:#cfbfe0"></div><div style="position:absolute;left:734px;top:1019px;width:8px;height:8px;background:#d2b7d5"></div><div style="position:absolute;left:749px;top:1019px;width:8px;height:8px;background:#8a79c4"></div><div style="position:absolute;left:764px;top:1019px;width:8px;height:8px;background:#ede2cc"></div><div style="position:absolute;left:772px;top:1019px;width:7px;height:8px;background:#f5f0ea"></div><div style="position:absolute;left:779px;top:1019px;width:8px;height:8px;background:#e6c6cc"></div><div style="position:absolute;left:734px;top:1027px;width:8px;height:7px;background:#f3dde3"></div><div style="position:absolute;left:742px;top:1027px;width:7px;height:7px;background:#f3eff2"></div><div style="position:absolute;left:749px;top:1027px;width:8px;height:7px;background:#cfbddf"></div><div style="position:absolute;left:757px;top:1027px;width:7px;height:7px;background:#ebe9ee"></div><div style="position:absolute;left:764px;top:1027px;width:8px;height:7px;background:#f8f2de"></div><div style="position:absolute;left:772px;top:1027px;width:7px;height:7px;background:#f5e4e6"></div><div style="position:absolute;left:779px;top:1027px;width:8px;height:7px;background:#efd8e0"></div><div style="position:absolute;left:787px;top:1027px;width:8px;height:7px;background:#eff2f6"></div><div style="position:absolute;left:734px;top:1034px;width:8px;height:8px;background:#cfbcdf"></div><div style="position:absolute;left:742px;top:1034px;width:7px;height:8px;background:#cfbcdf"></div><div style="position:absolute;left:749px;top:1034px;width:8px;height:8px;background:#cfbcdf"></div><div style="position:absolute;left:757px;top:1034px;width:7px;height:8px;background:#cfbcdf"></div><div style="position:absolute;left:764px;top:1034px;width:8px;height:8px;background:#cfbcdf"></div><div style="position:absolute;left:772px;top:1034px;width:7px;height:8px;background:#cfbcdf"></div><div style="position:absolute;left:779px;top:1034px;width:8px;height:8px;background:#cfbcdf"></div><div style="position:absolute;left:787px;top:1034px;width:8px;height:8px;background:#ede6f3"></div><div style="position:absolute;left:878px;top:1012px;width:7px;height:7px;background:#c7d6ea"></div><div style="position:absolute;left:893px;top:1012px;width:7px;height:7px;background:#c5cbdd"></div><div style="position:absolute;left:900px;top:1012px;width:8px;height:7px;background:#ebd6c6"></div><div style="position:absolute;left:908px;top:1012px;width:8px;height:7px;background:#d8e6f6"></div><div style="position:absolute;left:916px;top:1012px;width:7px;height:7px;background:#ead8c6"></div><div style="position:absolute;left:923px;top:1012px;width:8px;height:7px;background:#e8eaf4"></div><div style="position:absolute;left:870px;top:1019px;width:8px;height:8px;background:#f3e9e8"></div><div style="position:absolute;left:878px;top:1019px;width:7px;height:8px;background:#3f7bc4"></div><div style="position:absolute;left:885px;top:1019px;width:8px;height:8px;background:#ead6c3"></div><div style="position:absolute;left:893px;top:1019px;width:7px;height:8px;background:#265388"></div><div style="position:absolute;left:900px;top:1019px;width:8px;height:8px;background:#3b3364"></div><div style="position:absolute;left:908px;top:1019px;width:8px;height:8px;background:#442f4e"></div><div style="position:absolute;left:916px;top:1019px;width:7px;height:8px;background:#4a2f4d"></div><div style="position:absolute;left:923px;top:1019px;width:8px;height:8px;background:#316a9b"></div><div style="position:absolute;left:878px;top:1027px;width:7px;height:7px;background:#3f7bc4"></div><div style="position:absolute;left:885px;top:1027px;width:8px;height:7px;background:#c4b6b7"></div><div style="position:absolute;left:893px;top:1027px;width:7px;height:7px;background:#1f3a62"></div><div style="position:absolute;left:900px;top:1027px;width:8px;height:7px;background:#335f93"></div><div style="position:absolute;left:908px;top:1027px;width:8px;height:7px;background:#572f32"></div><div style="position:absolute;left:916px;top:1027px;width:7px;height:7px;background:#2e4b8f"></div><div style="position:absolute;left:923px;top:1027px;width:8px;height:7px;background:#2b2d66"></div><div style="position:absolute;left:996px;top:1068px;width:171px;height:44px;background:#efefef;border:2px solid #767676;border-radius:6px"></div><div style="position:absolute;left:931.5px;width:300px;top:1075.44px;font:normal 26.67px/29.524px 'Liberation Serif',serif;color:#000;letter-spacing:1.6px;white-space:nowrap;text-align:center;">Delete</div><div style="position:absolute;left:1176px;top:1068px;width:164px;height:44px;background:#efefef;border:2px solid #767676;border-radius:6px"></div><div style="position:absolute;left:1108.0px;width:300px;top:1075.44px;font:normal 26.67px/29.524px 'Liberation Serif',serif;color:#000;letter-spacing:1.35px;white-space:nowrap;text-align:center;">Select All</div></div></body></html>
